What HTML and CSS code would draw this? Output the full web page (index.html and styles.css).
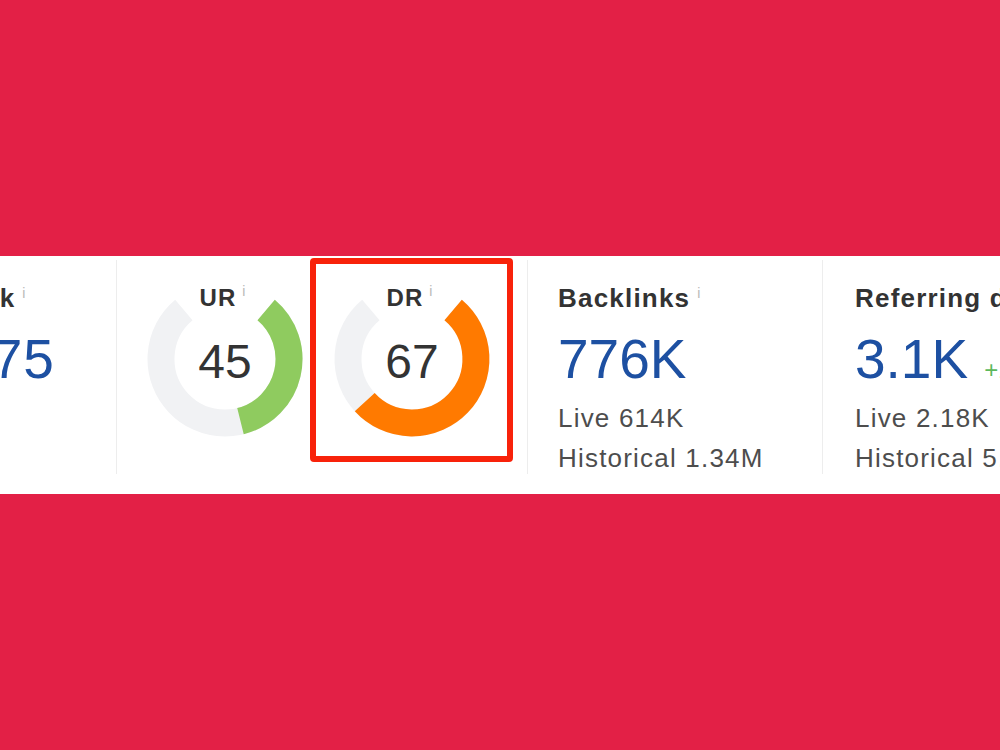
FILE: index.html
```html
<!DOCTYPE html>
<html lang="en">
<head>
    <meta charset="UTF-8">
    <meta name="viewport" content="width=device-width, initial-scale=1.0">
    <title>Site Overview</title>
    <link rel="stylesheet" href="styles.css">
</head>
<body>
    <div class="strip">
        <div class="metrics">
            <div class="metric metric-rank">
                <div class="metric-label">Ahrefs Rank<sup class="info">i</sup></div>
                <div class="metric-value">124,675</div>
            </div>

            <!-- gauges: track runs 40deg..320deg clockwise from top, fill = 280deg * value -->
            <div class="metric metric-ur">
                <svg class="gauge" viewBox="0 0 160 160" width="160" height="160">
                    <path class="gauge-track" d="M121.14 30.97 A64 64 0 1 1 38.86 30.97"/>
                    <path class="gauge-fill gauge-ur" d="M121.14 30.97 A64 64 0 0 1 95.48 142.10"/>
                    <text class="gauge-label" x="78" y="27">UR<tspan class="gauge-info" dx="6" dy="-10">i</tspan></text>
                    <text class="gauge-value" x="80" y="99">45</text>
                </svg>
            </div>

            <div class="metric metric-dr">
                <div class="highlight">
                    <svg class="gauge" viewBox="0 0 160 160" width="160" height="160">
                        <path class="gauge-track" d="M121.14 30.97 A64 64 0 1 1 38.86 30.97"/>
                        <path class="gauge-fill gauge-dr" d="M121.14 30.97 A64 64 0 1 1 32.73 123.16"/>
                        <text class="gauge-label" x="78" y="27">DR<tspan class="gauge-info" dx="6" dy="-10">i</tspan></text>
                        <text class="gauge-value" x="80" y="99">67</text>
                    </svg>
                </div>
            </div>

            <div class="metric metric-text metric-backlinks">
                <div class="metric-label">Backlinks<sup class="info">i</sup></div>
                <div class="metric-value">776K</div>
                <div class="metric-sub first">Live 614K</div>
                <div class="metric-sub">Historical 1.34M</div>
            </div>

            <div class="metric metric-text metric-domains">
                <div class="metric-label">Referring domains<sup class="info">i</sup></div>
                <div class="metric-value">3.1K<span class="metric-delta">+12</span></div>
                <div class="metric-sub first">Live 2.18K</div>
                <div class="metric-sub">Historical 5.62K</div>
            </div>
        </div>
    </div>
</body>
</html>
```

FILE: styles.css
```css
body {
    margin: 0;
    height: 100vh;
    background-color: #e32046;
    display: flex;
    align-items: center;
    font-family: "Liberation Sans", Arial, sans-serif;
}
.strip {
    width: 100%;
    height: 238px;
    background-color: #fff;
    overflow: hidden;
}
.metrics {
    display: flex;
    height: 214px;
    margin-top: 4px;
}
.metric {
    flex: 0 0 auto;
    box-sizing: border-box;
    height: 100%;
    white-space: nowrap;
}
.metric-rank {
    width: 299px;
    margin-left: -182px;
    padding: 23px 0 0 31px;
    border-right: 1px solid #ededed;
}
.metric-rank .metric-value {
    letter-spacing: 1px;
}
.metric-ur {
    width: 193px;
    padding: 19px 0 0 28px;
}
.metric-dr {
    width: 217px;
}
.highlight {
    box-sizing: border-box;
    width: 203px;
    height: 204px;
    margin-top: -2px;
    padding-top: 15px;
    border: 6px solid #f8220a;
    border-radius: 4px;
    display: flex;
    justify-content: center;
}
.metric-text {
    border-left: 1px solid #ededed;
    padding-top: 23px;
}
.metric-backlinks {
    width: 295px;
    padding-left: 30px;
}
.metric-domains {
    width: 400px;
    padding-left: 32px;
}

/* text metrics */
.metric-label {
    font-size: 26px;
    line-height: 30px;
    font-weight: bold;
    color: #333;
    letter-spacing: 1.2px;
}
.info {
    font-size: 14px;
    font-weight: normal;
    color: #b8b8b8;
    line-height: 0;
    vertical-align: 9px;
    margin-left: 7px;
    letter-spacing: 0;
}
.metric-value {
    font-size: 55px;
    line-height: 64px;
    color: #1d50a2;
    margin-top: 14px;
}
.metric-delta {
    font-size: 24px;
    line-height: 1;
    color: #5cb85c;
    margin-left: 16px;
}
.metric-sub {
    font-size: 26px;
    line-height: 40px;
    color: #4d4d4d;
    letter-spacing: 1.2px;
}
.metric-sub.first {
    margin-top: 7px;
}

/* gauges */
.gauge {
    display: block;
}
.gauge-track,
.gauge-fill {
    fill: none;
    stroke-width: 27;
}
.gauge-track {
    stroke: #f1f2f4;
}
.gauge-ur {
    stroke: #8fcb5f;
}
.gauge-dr {
    stroke: #ff7a00;
}
.gauge-label {
    font-size: 24px;
    font-weight: bold;
    fill: #333;
    text-anchor: middle;
    letter-spacing: 1px;
}
.gauge-info {
    font-size: 14px;
    font-weight: normal;
    fill: #b8b8b8;
}
.gauge-value {
    font-size: 48px;
    fill: #333;
    text-anchor: middle;
}
```
